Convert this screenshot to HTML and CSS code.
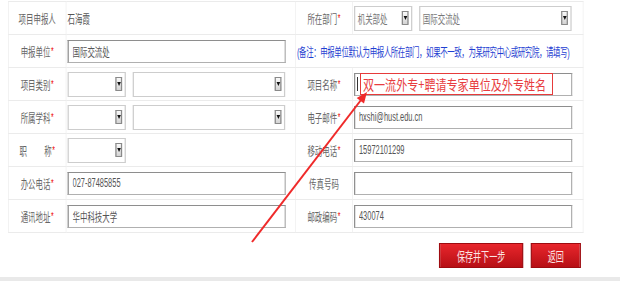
FILE: index.html
```html
<!DOCTYPE html>
<html lang="zh-CN">
<head>
    <meta charset="UTF-8">
    <title>项目申报</title>
    <link rel="stylesheet" href="styles.css">
</head>
<body>
    <div class="frame">
    <div class="page">
        <table class="form">
            <colgroup>
                <col class="c-label"><col class="c-field"><col class="c-label2"><col class="c-field2">
            </colgroup>
            <tr>
                <th>项目申报人</th>
                <td class="val">石海霞</td>
                <th>所在部门<em class="req">*</em></th>
                <td>
                    <div class="pair">
                        <div class="sel short">机关部处<span class="btn"></span></div>
                        <div class="sel long">国际交流处<span class="btn"></span></div>
                    </div>
                </td>
            </tr>
            <tr>
                <th>申报单位<em class="req">*</em></th>
                <td><input class="txt" type="text" value="国际交流处"></td>
                <td colspan="2" class="note">(备注：申报单位默认为申报人所在部门，如果不一致，为某研究中心或研究院，请填写)</td>
            </tr>
            <tr>
                <th>项目类别<em class="req">*</em></th>
                <td>
                    <div class="pair">
                        <div class="sel short"><span class="btn"></span></div>
                        <div class="sel long"><span class="btn"></span></div>
                    </div>
                </td>
                <th>项目名称<em class="req">*</em></th>
                <td><input class="txt" type="text" value=""></td>
            </tr>
            <tr>
                <th>所属学科<em class="req">*</em></th>
                <td>
                    <div class="pair">
                        <div class="sel short"><span class="btn"></span></div>
                        <div class="sel long"><span class="btn"></span></div>
                    </div>
                </td>
                <th>电子邮件<em class="req">*</em></th>
                <td><input class="txt" type="text" value="hxshi@hust.edu.cn"></td>
            </tr>
            <tr>
                <th>职<span class="gap"></span>称<em class="req">*</em></th>
                <td>
                    <div class="pair">
                        <div class="sel short"><span class="btn"></span></div>
                    </div>
                </td>
                <th>移动电话<em class="req">*</em></th>
                <td><input class="txt" type="text" value="15972101299"></td>
            </tr>
            <tr>
                <th>办公电话<em class="req">*</em></th>
                <td><input class="txt" type="text" value="027-87485855"></td>
                <th>传真号码</th>
                <td><input class="txt" type="text" value=""></td>
            </tr>
            <tr>
                <th>通讯地址<em class="req">*</em></th>
                <td><input class="txt" type="text" value="华中科技大学"></td>
                <th>邮政编码<em class="req">*</em></th>
                <td><input class="txt" type="text" value="430074"></td>
            </tr>
        </table>

        <div class="actions">
            <button class="btn-red save">保存并下一步</button>
            <button class="btn-red back">返回</button>
        </div>
        <div class="bottom-bar"></div>
    </div>
    </div>

    <!-- annotation drawn over the screenshot -->
    <div class="caret"></div>
    <div class="annot-box"><span class="annot-text">双一流外专+聘请专家单位及外专姓名</span></div>
    <svg class="arrow" width="620" height="281" viewBox="0 0 620 281">
        <line x1="252" y1="242" x2="361" y2="100" stroke="#ef2a2a" stroke-width="2"/>
        <polygon points="367,92 364,103.4 356.7,98" fill="#ef2a2a"/>
    </svg>
</body>
</html>
```

FILE: styles.css
```css
html, body {
    margin: 0;
    overflow: hidden;
    background: #fff;
}
body {
    position: relative;
    height: 281px;
    font-family: "Liberation Sans", "Noto Sans CJK SC", sans-serif;
    font-size: 12px;
    color: #555;
}

.frame {
    width: 620px;
    height: 281px;
    overflow: hidden;
}

/* the page is squeezed horizontally, like the capture */
.page {
    width: 1000px;
    padding-top: 1px;
    transform: scaleX(0.62);
    transform-origin: 0 0;
}

.form {
    border-collapse: collapse;
    table-layout: fixed;
    margin-left: 13px;
    width: 927px;
}
.c-label { width: 93px; }
.c-field { width: 370px; }
.c-label2 { width: 92px; }
.c-field2 { width: 372px; }

.form th, .form td {
    border: 1px solid #ebebeb;
    height: 32px;
    padding: 0 0 0 2px;
    white-space: nowrap;
}
.form th {
    font-weight: normal;
    color: #666;
    text-align: center;
    padding: 0;
}
.val {
    color: #555;
}
.req {
    color: #e00;
    font-style: normal;
    font-size: 11px;
    vertical-align: 2px;
    margin-left: 1px;
}
.gap {
    display: inline-block;
    width: 28px;
}
.note {
    color: #1f3fd2;
    letter-spacing: -0.62px;
}

.txt {
    display: block;
    width: 352px;
    height: 23px;
    box-sizing: border-box;
    border: solid #b0b0b0;
    border-width: 1px 2px;
    border-top-color: #8e8e8e;
    border-left-color: #8e8e8e;
    padding: 0 6px;
    font: 12px "Liberation Sans", "Noto Sans CJK SC", sans-serif;
    color: #555;
    background: #fff;
}

.pair {
    display: flex;
    gap: 11px;
}
.sel {
    display: flex;
    align-items: center;
    height: 25px;
    box-sizing: border-box;
    border: solid #cdcdcd;
    border-width: 1px 2px;
    padding: 0 4px 0 4px;
    color: #777;
    background: #fff;
}
.sel.short { width: 94px; }
.sel.long { width: 246px; }
.sel .btn {
    margin-left: auto;
    width: 11px;
    height: 14px;
    box-sizing: border-box;
    border: solid #8a8a8a;
    border-width: 1px 2px;
    background: linear-gradient(#fafafa, #d4d4d4);
    display: flex;
    align-items: center;
    justify-content: center;
}
.sel .btn::after {
    content: "";
    border-left: 3px solid transparent;
    border-right: 3px solid transparent;
    border-top: 4px solid #111;
}

.actions {
    display: flex;
    justify-content: flex-end;
    gap: 12px;
    width: 937px;
    margin-top: 10px;
}
.btn-red {
    height: 25px;
    padding: 0;
    border: solid #9e0b10;
    border-width: 1px 2px;
    background: linear-gradient(#e8262c, #b70f15);
    color: #fbe4e4;
    font: 13px "Noto Sans CJK SC", sans-serif;
    cursor: pointer;
}
.save { width: 136px; }
.back { width: 81px; }

.bottom-bar {
    margin-top: 9px;
    height: 10px;
    background: #e9e9e9;
}

/* annotation layer */
.caret {
    position: absolute;
    left: 357px;
    top: 77px;
    width: 1px;
    height: 14px;
    background: #333;
}
.annot-box {
    position: absolute;
    left: 360px;
    top: 73px;
    width: 193px;
    height: 22px;
    box-sizing: border-box;
    border: 1px solid #e63b3b;
    display: flex;
    align-items: center;
    padding-left: 2px;
}
.annot-text {
    display: inline-block;
    white-space: nowrap;
    font: 14px/1 "Noto Sans CJK SC", sans-serif;
    color: #e83c40;
    transform: scaleX(0.79);
    transform-origin: left center;
}
.arrow {
    position: absolute;
    left: 0;
    top: 0;
    pointer-events: none;
}
```
